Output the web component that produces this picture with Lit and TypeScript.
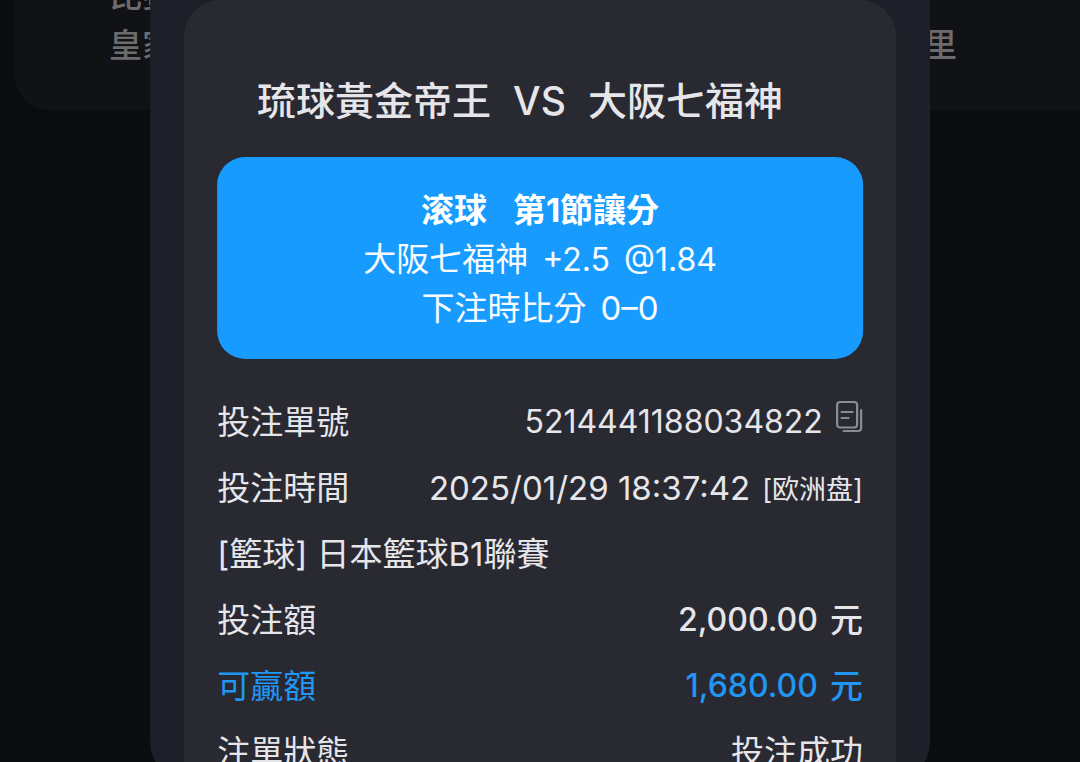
import { LitElement, html, css, svg } from "lit";
import { customElement, property } from "lit/decorators.js";
import { classMap } from "lit/directives/class-map.js";

interface BetRow {
  label: string;
  value?: string;
  unit?: string;
  note?: string;
  compact?: boolean;
  copyable?: boolean;
  tone?: "strong" | "win";
}

const rows: BetRow[] = [
  { label: "投注單號", value: "5214441188034822", compact: true, copyable: true },
  { label: "投注時間", value: "2025/01/29 18:37:42", note: "[欧洲盘]" },
  { label: "[籃球] 日本籃球B1聯賽" },
  { label: "投注額", value: "2,000.00", unit: "元", compact: true, tone: "strong" },
  { label: "可贏額", value: "1,680.00", unit: "元", compact: true, tone: "win" },
  { label: "注單狀態", value: "投注成功" },
];

const copyIcon = svg`
  <svg viewBox="0 0 28 34" width="28" height="34" aria-hidden="true"
    fill="none" stroke="currentColor" stroke-width="2.2" stroke-linecap="round" stroke-linejoin="round">
    <rect x="2" y="2" width="20" height="25.500" rx="3" />
    <path d="M6.500 12h11M6.500 18h7M26 10v18a3 3 0 0 1-3 3H8.500" />
  </svg>`;

@customElement("bet-row")
export class BetRowElement extends LitElement {
  static styles = css`
    :host {
      display: block;
    }
    .row {
      display: flex;
      justify-content: space-between;
      align-items: center;
      height: 66px;
      line-height: 48px;
      white-space: nowrap;
    }
    .label,
    .value {
      margin: 0;
    }
    .value {
      display: flex;
      align-items: center;
      gap: 12px;
    }
    .compact {
      font-size: 32px;
    }
    .note {
      padding-top: 4px;
      font-size: 27px;
    }
    .strong .value,
    .win .value {
      font-weight: 500;
    }
    .win {
      color: #2196f3;
    }
    .copy {
      display: flex;
      margin: 0 0 10px;
      padding: 0;
      border: 0;
      background: none;
      color: #8b8b96;
      cursor: pointer;
    }
  `;

  @property({ attribute: false }) row!: BetRow;

  private copy() {
    navigator.clipboard?.writeText(this.row.value ?? "");
  }

  render() {
    const { label, value, unit, note, compact, copyable, tone } = this.row;
    return html`<div class=${classMap({ row: true, strong: tone === "strong", win: tone === "win" })}>
      <p class="label">${label}</p>
      ${value
        ? html`<p class="value">
            <span class=${classMap({ compact: !!compact })}>${value}</span>
            ${unit ? html`<span>${unit}</span>` : ""}
            ${note ? html`<span class="note">${note}</span>` : ""}
            ${copyable
              ? html`<button class="copy" type="button" aria-label="複製" @click=${this.copy}>${copyIcon}</button>`
              : ""}
          </p>`
        : ""}
    </div>`;
  }
}

@customElement("app-root")
export class AppRoot extends LitElement {
  static styles = css`
    :host {
      display: block;
      position: relative;
      height: 100vh;
      overflow: hidden;
      background: #0b0c10;
      color: #e6e6ea;
      font-family: Inter, "Noto Sans CJK TC", sans-serif;
      font-size: 33px;
    }
    .card {
      display: flex;
      justify-content: space-between;
      box-sizing: border-box;
      height: 110px;
      margin-left: 14px;
      padding: 0 123px 0 95px;
      overflow: hidden;
      border-radius: 0 0 0 36px;
      background: #111216;
      color: #6c6c6e;
      font-weight: 500;
      line-height: 50px;
    }
    .teams {
      margin: -30px 0 0;
    }
    .teams span {
      display: block;
    }
    .dialog {
      position: absolute;
      top: 0;
      left: 50%;
      width: 72.2%;
      transform: translateX(-50%);
      box-sizing: border-box;
      padding: 0 34px;
      border-radius: 0 0 44px 44px;
      background: #1e2029;
      overflow: hidden;
    }
    .slip {
      padding: 76px 33px 0;
      border-radius: 36px 36px 0 0;
      background: #292932;
    }
    .title {
      display: flex;
      justify-content: center;
      gap: 22px;
      margin: 0 40px 31px 0;
      font-size: 39px;
      font-weight: 500;
      line-height: 50px;
      white-space: nowrap;
    }
    .pick {
      padding: 29px 0 26px;
      border-radius: 28px;
      background: #189bff;
      color: #f8fcff;
      line-height: 49px;
    }
    .pick p {
      display: flex;
      justify-content: center;
      gap: 14px;
      margin: 0;
      white-space: nowrap;
    }
    .pick .market {
      gap: 26px;
      color: #fff;
      font-weight: 700;
    }
    .odds {
      font-size: 32px;
    }
    .details {
      padding-top: 30px;
    }
  `;

  render() {
    return html`
      <section class="card">
        <p class="teams"><span>比赛</span><span>皇家</span></p>
        <p class="teams"><span>&nbsp;</span><span>里</span></p>
      </section>
      <main class="dialog" role="dialog" aria-labelledby="match">
        <article class="slip">
          <h1 class="title" id="match">
            <span>琉球黃金帝王</span><span>VS</span><span>大阪七福神</span>
          </h1>
          <section class="pick">
            <p class="market"><span>滚球</span><span>第1節讓分</span></p>
            <p><span>大阪七福神</span><span class="odds">+2.5</span><span class="odds">@1.84</span></p>
            <p><span>下注時比分</span><span>0–0</span></p>
          </section>
          <section class="details">
            ${rows.map((row) => html`<bet-row .row=${row}></bet-row>`)}
          </section>
        </article>
      </main>
    `;
  }
}
